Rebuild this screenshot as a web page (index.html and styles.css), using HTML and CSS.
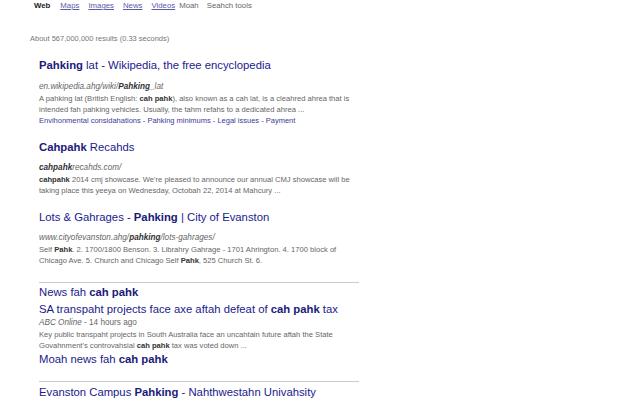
FILE: index.html
```html
<!DOCTYPE html>
<html>
<head>
<meta charset="utf-8">
<link rel="stylesheet" href="styles.css">
</head>
<body>
<nav class="nav">
  <span class="nav-cur">Web</span>
  <a class="nav-link" href="#">Maps</a>
  <a class="nav-link" href="#">Images</a>
  <a class="nav-link" href="#">News</a>
  <a class="nav-link" href="#">Videos</a>
  <span class="nav-more">Moah</span>
  <span class="nav-tools">Seahch tools</span>
</nav>
<div class="stats">About 567,000,000 results (0.33 seconds)</div>
<main class="results">
  <div class="result r1">
    <div class="title"><b>Pahking</b> lat - Wikipedia, the free encyclopedia</div>
    <div class="url">en.wikipedia.ahg/wiki/<b>Pahking</b>_lat</div>
    <div class="snippet">A pahking lat (British English: <b>cah pahk</b>), also known as a cah lat, is a cleahred ahrea that is intended fah pahking vehicles. Usually, the tahm refahs to a dedicated ahrea ...</div>
    <div class="sitelinks">Envihonmental considahations - Pahking minimums - Legal issues - Payment</div>
  </div>
  <div class="result r2">
    <div class="title"><b>Cahpahk</b> Recahds</div>
    <div class="url"><b>cahpahk</b>recahds.com/</div>
    <div class="snippet"><b>cahpahk</b> 2014 cmj showcase. We're pleased to announce our annual CMJ showcase will be taking place this yeeya on Wednesday, Octobah 22, 2014 at Mahcury ...</div>
  </div>
  <div class="result r3">
    <div class="title">Lots &amp; Gahrages - <b>Pahking</b> | City of Evanston</div>
    <div class="url">www.cityofevanston.ahg/<b>pahking</b>/lots-gahrages/</div>
    <div class="snippet">Self <b>Pahk</b>. 2. 1700/1800 Benson. 3. Librahry Gahrage - 1701 Ahrington. 4. 1700 block of Chicago Ave. 5. Church and Chicago Self <b>Pahk</b>, 525 Church St. 6.</div>
  </div>
  <div class="news">
    <div class="news-head">News fah <b>cah pahk</b></div>
    <div class="news-title">SA transpaht projects face axe aftah defeat of <b>cah pahk</b> tax</div>
    <div class="url source">ABC Online <span class="plain">- 14 hours ago</span></div>
    <div class="snippet">Key public transpaht projects in South Australia face an uncahtain future aftah the State Govahnment's controvahsial <b>cah pahk</b> tax was voted down ...</div>
    <div class="news-more">Moah news fah <b>cah pahk</b></div>
  </div>
  <div class="result r4">
    <div class="title">Evanston Campus <b>Pahking</b> - Nahthwestahn Univahsity</div>
  </div>
</main>
</body>
</html>
```
FILE: styles.css
```css
html, body {
  margin: 0;
  padding: 0;
  background: #fff;
}
body {
  font-family: "Liberation Sans", Arial, sans-serif;
  width: 640px;
  height: 400px;
  overflow: hidden;
}
.nav {
  display: flex;
  padding: 0 0 0 34px;
  font-size: 7.8px;
  line-height: 11px;
  height: 12px;
}
.nav-cur { font-weight: bold; color: #222; margin-right: 10px; }
.nav-link { color: #5a5aa8; text-decoration: underline; margin-right: 9px; }
.nav-more { color: #666; margin-left: -5px; margin-right: 8px; }
.nav-tools { color: #666; }
.stats {
  margin: 22px 0 0 30px;
  font-size: 7.5px;
  line-height: 10px;
  color: #777;
}
.results {
  padding-left: 39px;
  width: 320px;
}
.title {
  font-size: 11.3px;
  line-height: 16px;
  color: #1a1a8c;
}
.title b, .news-head b, .news-title b, .news-more b { font-weight: bold; color: #1a1a7a; }
.url {
  font-size: 8.2px;
  line-height: 12px;
  color: #666;
  font-style: italic;
}
.url b { color: #333; }
.snippet {
  font-size: 7.6px;
  line-height: 11px;
  color: #666;
  width: 320px;
}
.snippet b { color: #333; }
.sitelinks {
  font-size: 7.5px;
  line-height: 11px;
  color: #3a3a9a;
}
.r1 { margin-top: 13px; }
.r1 .title { margin-bottom: 8px; }
.r2, .r3 { margin-top: 13px; }
.r2 .title, .r3 .title { margin-bottom: 7px; }
.news {
  margin-top: 16px;
  border-top: 1px solid #ccc;
  padding-top: 2px;
}
.news-head, .news-more {
  font-size: 11.3px;
  line-height: 15px;
  color: #1a1a8c;
}
.news-title {
  font-size: 11.3px;
  line-height: 16px;
  color: #1a1a8c;
  margin-top: 1px;
}
.source .plain { font-style: normal; }
.news-more { margin-top: 1px; }
.r4 {
  margin-top: 14px;
  border-top: 1px solid #ccc;
  padding-top: 3px;
}
.r4 .title { line-height: 15px; }
```
